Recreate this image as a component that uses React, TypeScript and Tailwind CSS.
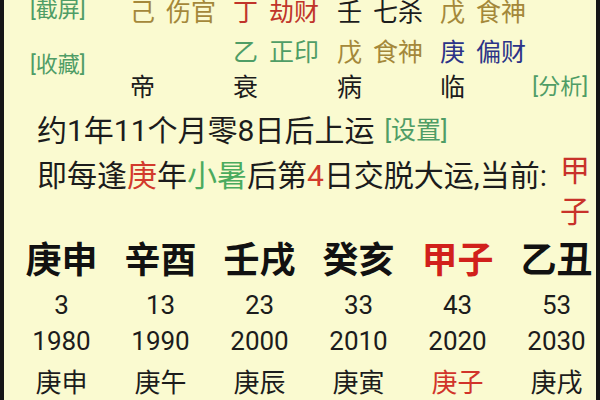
import React from "react";

const FONT = { fontFamily: 'Roboto, "Noto Sans CJK SC", "Noto Sans", sans-serif' };

const GREEN = "text-[#4f9d66]";
const GOLD = "text-[#a4883a]";
const RED = "text-[#c0342a]";
const BLUE = "text-[#2b3388]";
const BLACK = "text-[#1c1c1c]";

function Cell({ a, b, cls }: { a: string; b: string; cls: string }) {
  return (
    <div className={`flex whitespace-nowrap ${cls}`}>
      <span>{a}</span>
      <span className="ml-[11px]">{b}</span>
    </div>
  );
}

const big = [
  { t: "庚申", red: false },
  { t: "辛酉", red: false },
  { t: "壬戌", red: false },
  { t: "癸亥", red: false },
  { t: "甲子", red: true },
  { t: "乙丑", red: false },
];
const ages = ["3", "13", "23", "33", "43", "53"];
const years = ["1980", "1990", "2000", "2010", "2020", "2030"];
const yz = [
  { t: "庚申", red: false },
  { t: "庚午", red: false },
  { t: "庚辰", red: false },
  { t: "庚寅", red: false },
  { t: "庚子", red: true },
  { t: "庚戌", red: false },
];

export default function App() {
  return (
    <div
      style={FONT}
      className="w-[600px] h-[400px] overflow-hidden bg-[#fafad0] border-l-[4px] border-r-[4px] border-[#151515]"
    >
      <div className="w-full h-full overflow-hidden">
        {/* top block */}
        <div className="flex h-[105px] -mt-[2px]">
          <div className={`w-[126px] pl-[26px] text-[22px] ${GREEN}`}>
            <div className="leading-[30px] h-[30px] -mt-[3px] whitespace-nowrap">[截屏]</div>
            <div className="leading-[30px] h-[30px] mt-[25px] whitespace-nowrap">[收藏]</div>
          </div>
          <div className="flex-1 grid grid-cols-[103px_104px_103px_1fr] grid-rows-[40px_35px_30px] text-[25px] leading-[30px]">
            <Cell a="己" b="伤官" cls={GOLD} />
            <Cell a="丁" b="劫财" cls={RED} />
            <Cell a="壬" b="七杀" cls={BLACK} />
            <Cell a="戊" b="食神" cls={GOLD} />

            <div />
            <Cell a="乙" b="正印" cls={GREEN} />
            <Cell a="戊" b="食神" cls={GOLD} />
            <Cell a="庚" b="偏财" cls={BLUE} />

            <div className={BLACK}>帝</div>
            <div className={BLACK}>衰</div>
            <div className={BLACK}>病</div>
            <div className="flex justify-between pr-[8px]">
              <span className={BLACK}>临</span>
              <span className={`text-[22px] -mt-[1px] ${GREEN}`}>[分析]</span>
            </div>
          </div>
        </div>

        {/* 上运 row */}
        <div className={`mt-[8px] h-[40px] leading-[40px] pl-[33px] text-[30px] whitespace-nowrap flex items-center ${BLACK}`}>
          <span>约1年11个月零8日后上运</span>
          <span className={`ml-[10px] text-[25px] ${GREEN}`}>[设置]</span>
        </div>

        {/* 交脱大运 row */}
        <div className="mt-[5px] flex items-start justify-between pl-[33px] pr-[6px] text-[30px]">
          <div className={`h-[40px] leading-[40px] whitespace-nowrap ${BLACK}`}>
            即每逢<span className="text-[#d23a2c]">庚</span>年
            <span className="text-[#4aab5e]">小暑</span>后第
            <span className="text-[#d23a2c]">4</span>日交脱大运,当前:
          </div>
          <div className="-mt-[6px] w-[30px] flex flex-col leading-[41px] text-[#c8322a]">
            <span>甲</span>
            <span>子</span>
          </div>
        </div>

        {/* big ganzhi */}
        <div className="mt-[7px] pl-[8px] grid grid-cols-[repeat(6,99px)] h-[44px] leading-[44px] text-[36px] font-bold">
          {big.map((b, i) => (
            <div key={i} className={`text-center whitespace-nowrap ${b.red ? "text-[#d1201b]" : "text-[#111111]"}`}>
              {b.t}
            </div>
          ))}
        </div>

        <div className={`mt-[4px] pl-[8px] grid grid-cols-[repeat(6,99px)] h-[36px] leading-[36px] text-[26px] ${BLACK}`}>
          {ages.map((a, i) => (
            <div key={i} className="text-center">{a}</div>
          ))}
        </div>
        <div className={`pl-[8px] grid grid-cols-[repeat(6,99px)] h-[36px] leading-[36px] text-[26px] ${BLACK}`}>
          {years.map((a, i) => (
            <div key={i} className="text-center">{a}</div>
          ))}
        </div>
        <div className="mt-[6px] pl-[8px] grid grid-cols-[repeat(6,99px)] h-[36px] leading-[36px] text-[26px]">
          {yz.map((b, i) => (
            <div key={i} className={`text-center whitespace-nowrap ${b.red ? "text-[#d1342a]" : "text-[#1c1c1c]"}`}>
              {b.t}
            </div>
          ))}
        </div>
      </div>
    </div>
  );
}
